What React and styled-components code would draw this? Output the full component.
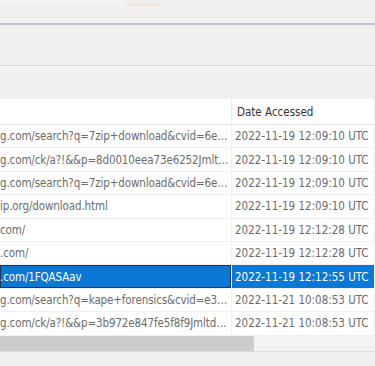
import React from 'react';
import styled, { createGlobalStyle } from 'styled-components';

const GlobalStyle = createGlobalStyle`
  html, body {
    margin: 0;
    padding: 0;
    background: #f0f0f0;
  }
  body {
    font-family: "DejaVu Sans Condensed", "Liberation Sans", Arial, sans-serif;
  }
`;

const Page = styled.div`
  width: 375px;
  height: 366px;
  overflow: hidden;
  display: flex;
  flex-direction: column;
  background: #f0f0f0;
`;

const TabStrip = styled.div`
  height: 6px;
  display: flex;
  align-items: flex-end;
  gap: 3px;
`;

const TabHint = styled.div`
  width: ${({ $w }) => $w}px;
  height: ${({ $accent }) => ($accent ? 2 : 6)}px;
  background: ${({ $accent }) => ($accent ? '#f3e4dc' : '#f4f4f4')};
`;

const Toolbar = styled.div`
  height: 11px;
  border-bottom: 1px solid #e9eee6;
`;

const Divider = styled.div`
  height: 5px;
  border-top: 2px solid #b9c3c9;
  border-bottom: 1px solid #eef2ec;
  background: #f0f0f0;
  margin-top: 5px;
`;

const Panel = styled.div`
  height: 34px;
  border-bottom: 1px solid #d6d6d6;
  box-shadow: 0 1px 0 #fafafa;
`;

const Gap = styled.div`
  height: 33px;
`;

const Grid = styled.div`
  display: grid;
  grid-template-columns: 232px 1fr;
  background: #ffffff;
`;

const HeaderCell = styled.div`
  height: 25px;
  display: flex;
  align-items: center;
  padding-left: ${({ $first }) => ($first ? 0 : 5)}px;
  border-right: 1px solid #ececec;
  border-bottom: 1px solid #e3e3e3;
  font-size: 11.5px;
  color: #333333;
  white-space: nowrap;
`;

const Cell = styled.div`
  height: 22.4px;
  display: flex;
  align-items: center;
  padding: 0 ${({ $first }) => ($first ? 2 : 0)}px 0 ${({ $first }) => ($first ? 0 : 3)}px;
  border-right: 1px solid ${({ $selected }) => ($selected ? '#ffffff' : '#f0f0f0')};
  border-bottom: 1px solid #f0f0f0;
  font-size: 11.5px;
  letter-spacing: ${({ $first }) => ($first ? '-0.12px' : '0')};
  color: ${({ $selected }) => ($selected ? '#ffffff' : '#6b6b6b')};
  background: ${({ $selected }) => ($selected ? '#0a78d4' : '#ffffff')};
  box-shadow: ${({ $focus }) => ($focus ? 'inset 0 0 0 1px #17365c' : 'none')};
  overflow: hidden;
  min-width: 0;
`;

const CellText = styled.span`
  white-space: nowrap;
`;

const ScrollBar = styled.div`
  height: 15px;
  background: #f3f3f3;
  border-bottom: 1px solid #dedede;
  display: flex;
`;

const Thumb = styled.div`
  width: 254px;
  background: #cdcdcd;
`;

const Footer = styled.div`
  flex: 1;
  background: #f0f0f0;
`;

const rows = [
  ['g.com/search?q=7zip+download&cvid=6e…', '2022-11-19 12:09:10 UTC'],
  ['g.com/ck/a?!&&p=8d0010eea73e6252Jmlt…', '2022-11-19 12:09:10 UTC'],
  ['g.com/search?q=7zip+download&cvid=6e…', '2022-11-19 12:09:10 UTC'],
  ['ip.org/download.html', '2022-11-19 12:09:10 UTC'],
  ['com/', '2022-11-19 12:12:28 UTC'],
  ['.com/', '2022-11-19 12:12:28 UTC'],
  ['.com/1FQASAav', '2022-11-19 12:12:55 UTC', true],
  ['g.com/search?q=kape+forensics&cvid=e3…', '2022-11-21 10:08:53 UTC'],
  ['g.com/ck/a?!&&p=3b972e847fe5f8f9Jmltd…', '2022-11-21 10:08:53 UTC'],
];

const App = () => (
  <>
    <GlobalStyle />
    <Page>
      <TabStrip>
        <TabHint $w={125} />
        <TabHint $w={33} $accent />
      </TabStrip>
      <Toolbar />
      <Divider />
      <Panel />
      <Gap />
      <Grid>
        <HeaderCell $first />
        <HeaderCell>Date Accessed</HeaderCell>
        {rows.map(([url, date, selected], i) => (
          <React.Fragment key={i}>
            <Cell $first $selected={selected} $focus={selected}>
              <CellText>{url}</CellText>
            </Cell>
            <Cell $selected={selected}>
              <CellText>{date}</CellText>
            </Cell>
          </React.Fragment>
        ))}
      </Grid>
      <ScrollBar>
        <Thumb />
      </ScrollBar>
      <Footer />
    </Page>
  </>
);

export default App;
